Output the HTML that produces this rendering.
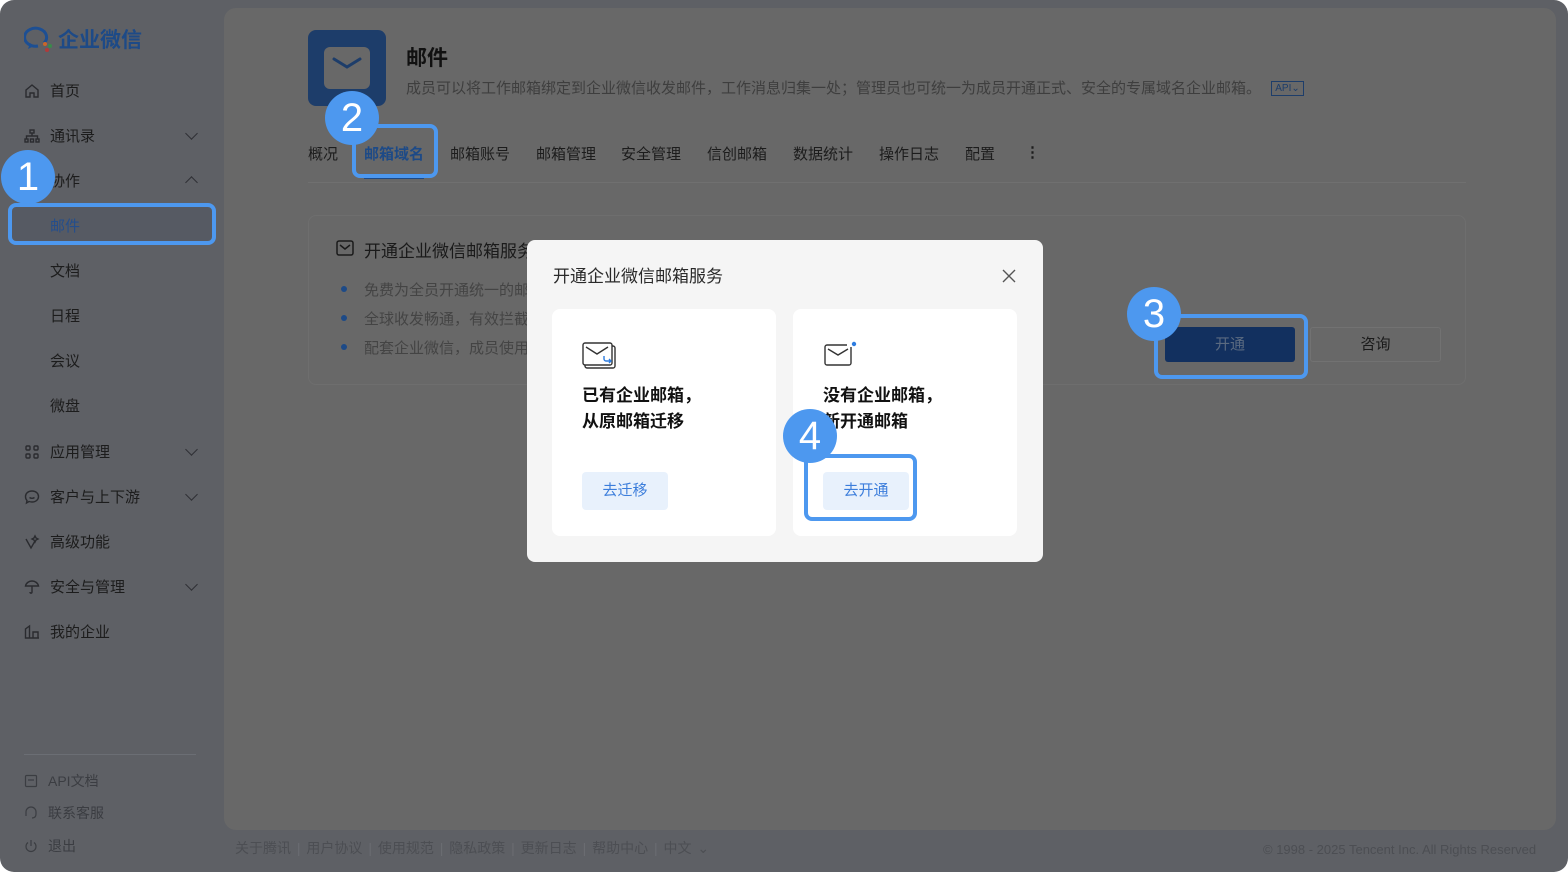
<!DOCTYPE html>
<html><head><meta charset="utf-8"><style>
*{margin:0;padding:0;box-sizing:border-box}
body{width:1568px;height:872px;background:#fff;font-family:"Liberation Sans","Noto Sans CJK SC",sans-serif;position:relative;overflow:hidden;color:#1e1e1e}
.frame{position:absolute;left:0;top:0;width:1568px;height:872px;background:#5e6065;border-radius:14px}
.abs{position:absolute}
.nav{position:absolute;left:24px;font-size:15px;color:#1c1c1c;display:flex;align-items:center}
.nav svg{margin-right:10px}
.chev{position:absolute;left:187px;width:9px;height:9px;border-right:1.4px solid #2f3035;border-bottom:1.4px solid #2f3035;transform:rotate(45deg)}
.main{position:absolute;left:224px;top:8px;width:1332px;height:822px;background:#686868;border-radius:12px}
.tab{position:absolute;top:143px;font-size:15px;color:#1c1c1c}
.badge{position:absolute;width:54px;height:54px;border-radius:50%;background:#4d98ef;color:#fff;font-size:40px;line-height:54px;text-align:center;font-family:"Liberation Sans",sans-serif}
.hl{position:absolute;border:4px solid #4d98ef;border-radius:8px}
.foot{position:absolute;top:838px;font-size:14px;color:#4c4e53}
.modal{position:absolute;left:527px;top:240px;width:516px;height:322px;background:#f5f5f5;border-radius:8px}
.card{position:absolute;top:69px;width:224px;height:227px;background:#fff;border-radius:8px}
.card h3{position:absolute;left:30px;top:74px;font-size:17px;line-height:26px;font-weight:bold;color:#111}
.btn{position:absolute;left:30px;top:163px;width:86px;height:38px;background:#e8f1fc;color:#3b7ddb;font-size:15px;line-height:38px;text-align:center;border-radius:4px}
</style></head><body>
<div class="frame"></div>
<svg class="abs" style="left:24px;top:26px" width="30" height="26" viewBox="0 0 30 26"><path d="M14 20a11 9 0 1 1 6-3" fill="none" stroke="#1d4f93" stroke-width="3"/><path d="M6 17l-2 6 6-3" fill="#1d4f93"/><circle cx="21" cy="18" r="2" fill="#c9662a"/><circle cx="26" cy="20" r="2" fill="#3a8a4a"/><circle cx="23" cy="24" r="2" fill="#b03a3a"/></svg>
<div class="abs" style="left:58px;top:24px;font-size:21px;font-weight:bold;color:#1d4a87">企业微信</div>

<div class="nav" style="top:80px"><svg width="16" height="16" viewBox="0 0 16 16" fill="none" stroke="#2a2b2f" stroke-width="1.4"><path d="M2 7l6-5 6 5v7H10v-4H6v4H2z"/></svg>首页</div>
<div class="nav" style="top:125px"><svg width="16" height="16" viewBox="0 0 16 16" fill="none" stroke="#2a2b2f" stroke-width="1.4"><rect x="6" y="2" width="4" height="3"/><rect x="1" y="11" width="3" height="3"/><rect x="6.5" y="11" width="3" height="3"/><rect x="12" y="11" width="3" height="3"/><path d="M8 5v3M2.5 11V8h11v3"/></svg>通讯录</div>
<div class="chev" style="top:129px"></div>
<div class="nav" style="top:170px;left:50px">协作</div>
<div class="chev" style="top:178px;transform:rotate(225deg)"></div>
<div class="abs" style="left:12px;top:207px;width:200px;height:34px;background:#565a63;border-radius:5px"></div>
<div class="nav" style="top:215px;left:50px;color:#244e8c">邮件</div>
<div class="nav" style="top:260px;left:50px">文档</div>
<div class="nav" style="top:305px;left:50px">日程</div>
<div class="nav" style="top:350px;left:50px">会议</div>
<div class="nav" style="top:395px;left:50px">微盘</div>
<div class="nav" style="top:441px"><svg width="16" height="16" viewBox="0 0 16 16" fill="none" stroke="#2a2b2f" stroke-width="1.4"><rect x="2" y="2" width="4" height="4" rx="1"/><rect x="10" y="2" width="4" height="4" rx="1"/><rect x="2" y="10" width="4" height="4" rx="1"/><rect x="10" y="10" width="4" height="4" rx="1"/></svg>应用管理</div>
<div class="chev" style="top:445px"></div>
<div class="nav" style="top:486px"><svg width="16" height="16" viewBox="0 0 16 16" fill="none" stroke="#2a2b2f" stroke-width="1.4"><path d="M8 2c4 0 6.5 2.5 6.5 5.5S12 13 8 13c-1 0-2-.2-3-.5L2.5 14 3 11.5C2 10.5 1.5 9 1.5 7.5 1.5 4.5 4 2 8 2z"/><path d="M5.5 8.5c1.5 1 3.5 1 5 0"/></svg>客户与上下游</div>
<div class="chev" style="top:490px"></div>
<div class="nav" style="top:531px"><svg width="16" height="16" viewBox="0 0 16 16" fill="none" stroke="#2a2b2f" stroke-width="1.4"><path d="M2 5l5 9 4-7M11 2l1 2 2 1-2 1-1 2-1-2-2-1 2-1z"/></svg>高级功能</div>
<div class="nav" style="top:576px"><svg width="16" height="16" viewBox="0 0 16 16" fill="none" stroke="#2a2b2f" stroke-width="1.4"><path d="M1.5 7C2 4 5 2 8 2s6 2 6.5 5zM8 7v6c0 1.5-2 1.5-2 0"/></svg>安全与管理</div>
<div class="chev" style="top:580px"></div>
<div class="nav" style="top:621px"><svg width="16" height="16" viewBox="0 0 16 16" fill="none" stroke="#2a2b2f" stroke-width="1.4"><path d="M1.5 14V5l4-3v12zM9 14V8h5v6zM1 14h14"/></svg>我的企业</div>
<div class="abs" style="left:24px;top:754px;width:172px;height:1px;background:#6b6e74"></div>
<div class="nav" style="top:771px;font-size:14px;color:#3b3d42"><svg width="14" height="14" viewBox="0 0 14 14" fill="none" stroke="#3b3d42" stroke-width="1.2"><rect x="1.5" y="1.5" width="11" height="11" rx="1"/><path d="M4 6h6"/></svg>API文档</div>
<div class="nav" style="top:803px;font-size:14px;color:#3b3d42"><svg width="14" height="14" viewBox="0 0 14 14" fill="none" stroke="#3b3d42" stroke-width="1.2"><path d="M2 8V6a5 5 0 0 1 10 0v2M2 8v2M12 8c0 3-2 4-4 4"/></svg>联系客服</div>
<div class="nav" style="top:836px;font-size:14px;color:#3b3d42"><svg width="14" height="14" viewBox="0 0 14 14" fill="none" stroke="#3b3d42" stroke-width="1.2"><path d="M4 3.5a5 5 0 1 0 6 0M7 1v6"/></svg>退出</div>

<div class="main"></div>
<div class="abs" style="left:308px;top:30px;width:78px;height:76px;background:#1d3d6a;border-radius:8px"></div>
<div class="abs" style="left:324px;top:47px;width:46px;height:42px;background:#686868;border-radius:6px"></div>
<svg class="abs" style="left:332px;top:56px" width="30" height="14" viewBox="0 0 30 14"><path d="M2 3l13 8 13-8" fill="none" stroke="#1d3d6a" stroke-width="3" stroke-linecap="round"/></svg>
<div class="abs" style="left:406px;top:42px;font-size:21px;font-weight:bold;color:#111">邮件</div>
<div class="abs" style="left:406px;top:77px;font-size:15px;color:#3e3e3e;white-space:nowrap">成员可以将工作邮箱绑定到企业微信收发邮件，工作消息归集一处；管理员也可统一为成员开通正式、安全的专属域名企业邮箱。</div>
<div class="abs" style="left:1271px;top:81px;width:33px;height:15px;border:1px solid #1d3d6a;font-size:10px;line-height:13px;color:#1d3d6a;text-align:center">API⌄</div>

<div class="tab" style="left:308px">概况</div>
<div class="tab" style="left:364px;color:#1d4a87;font-weight:bold">邮箱域名</div>
<div class="abs" style="left:364px;top:176px;width:60px;height:3px;background:#1d4a87"></div>
<div class="tab" style="left:450px">邮箱账号</div>
<div class="tab" style="left:536px">邮箱管理</div>
<div class="tab" style="left:621px">安全管理</div>
<div class="tab" style="left:707px">信创邮箱</div>
<div class="tab" style="left:793px">数据统计</div>
<div class="tab" style="left:879px">操作日志</div>
<div class="tab" style="left:965px">配置</div>
<div class="tab" style="left:1025px;font-weight:bold">⋮</div>
<div class="abs" style="left:308px;top:182px;width:1158px;height:1px;background:#707070"></div>

<div class="abs" style="left:308px;top:215px;width:1158px;height:170px;border:1px solid #6e6e6e;border-radius:8px"></div>
<svg class="abs" style="left:336px;top:240px" width="18" height="16" viewBox="0 0 18 16"><rect x="1" y="1" width="16" height="14" rx="2" fill="none" stroke="#1a1a1a" stroke-width="1.5"/><path d="M4 5l5 4 5-4" fill="none" stroke="#1a1a1a" stroke-width="1.5"/></svg>
<div class="abs" style="left:364px;top:237px;font-size:17px;color:#1a1a1a;white-space:nowrap">开通企业微信邮箱服务</div>
<div class="abs" style="left:341px;top:286px;width:6px;height:6px;border-radius:50%;background:#1d4a87"></div>
<div class="abs" style="left:341px;top:315px;width:6px;height:6px;border-radius:50%;background:#1d4a87"></div>
<div class="abs" style="left:341px;top:344px;width:6px;height:6px;border-radius:50%;background:#1d4a87"></div>
<div class="abs" style="left:364px;top:279px;font-size:15px;color:#444;white-space:nowrap">免费为全员开通统一的邮</div>
<div class="abs" style="left:364px;top:308px;font-size:15px;color:#444;white-space:nowrap">全球收发畅通，有效拦截</div>
<div class="abs" style="left:364px;top:337px;font-size:15px;color:#444;white-space:nowrap">配套企业微信，成员使用</div>
<div class="abs" style="left:1165px;top:327px;width:130px;height:35px;background:#12305f;border-radius:3px;color:#5a6a80;font-size:15px;line-height:35px;text-align:center">开通</div>
<div class="abs" style="left:1310px;top:327px;width:131px;height:35px;border:1px solid #727272;border-radius:3px;color:#1a1a1a;font-size:15px;line-height:33px;text-align:center">咨询</div>

<div class="foot" style="left:235px;word-spacing:2px">关于腾讯 <span style="color:#6a6c71">|</span> 用户协议 <span style="color:#6a6c71">|</span> 使用规范 <span style="color:#6a6c71">|</span> 隐私政策 <span style="color:#6a6c71">|</span> 更新日志 <span style="color:#6a6c71">|</span> 帮助中心 <span style="color:#6a6c71">|</span> 中文 ⌄</div>
<div class="foot" style="left:1263px;top:842px;font-size:13px">© 1998 - 2025 Tencent Inc. All Rights Reserved</div>

<div class="modal">
  <div class="abs" style="left:26px;top:22px;font-size:17px;color:#2a2a2a">开通企业微信邮箱服务</div>
  <svg class="abs" style="left:474px;top:28px" width="16" height="16" viewBox="0 0 16 16"><path d="M2 2l12 12M14 2L2 14" stroke="#555" stroke-width="1.4"/></svg>
  <div class="card" style="left:25px">
    <svg class="abs" style="left:30px;top:32px" width="36" height="30" viewBox="0 0 36 30" fill="none" stroke="#333" stroke-width="1.4"><rect x="3" y="5" width="30" height="22" rx="2"/><rect x="1" y="2" width="29" height="22" rx="2" fill="#fff"/><path d="M4 6l11 7 11-7"/><path d="M22 15v3c0 1 1 2 2 2h5M27 18l2 2-2 2" stroke="#2e7de0"/></svg>
    <h3>已有企业邮箱，<br>从原邮箱迁移</h3>
    <div class="btn">去迁移</div>
  </div>
  <div class="card" style="left:266px">
    <svg class="abs" style="left:30px;top:32px" width="36" height="30" viewBox="0 0 36 30" fill="none" stroke="#333" stroke-width="1.4"><path d="M28 6v16a2 2 0 0 1-2 2H4a2 2 0 0 1-2-2V6a2 2 0 0 1 2-2h20"/><path d="M5 8l10 6 10-6"/><circle cx="31" cy="3" r="2.2" fill="#2e7de0" stroke="none"/></svg>
    <h3>没有企业邮箱，<br>新开通邮箱</h3>
    <div class="btn">去开通</div>
  </div>
</div>

<div class="hl" style="left:8px;top:203px;width:208px;height:42px"></div>
<div class="badge" style="left:1px;top:150px">1</div>
<div class="hl" style="left:352px;top:124px;width:86px;height:54px"></div>
<div class="badge" style="left:325px;top:91px">2</div>
<div class="hl" style="left:1154px;top:314px;width:154px;height:65px"></div>
<div class="badge" style="left:1127px;top:287px">3</div>
<div class="hl" style="left:804px;top:454px;width:113px;height:67px"></div>
<div class="badge" style="left:783px;top:409px">4</div>
</body></html>
